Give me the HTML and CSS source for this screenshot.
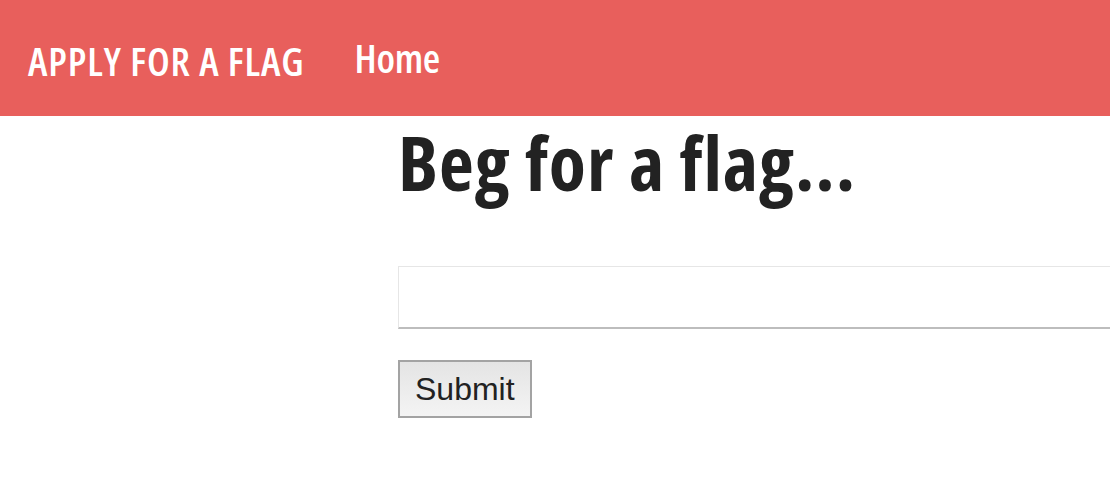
FILE: index.html
```html
<!DOCTYPE html>
<html>
<head>
<meta charset="utf-8">
<link rel="stylesheet" href="styles.css">
</head>
<body>
<nav class="navbar">
  <a class="brand" href="#">APPLY FOR A FLAG</a>
  <a class="nav-link" href="#">Home</a>
</nav>
<main class="main">
  <h1 class="title">Beg for a flag...</h1>
  <form class="form">
    <input class="field" type="text">
    <button class="submit" type="button">Submit</button>
  </form>
</main>
</body>
</html>
```

FILE: styles.css
```css
html, body {
  margin: 0;
  padding: 0;
  background: #fff;
}
body {
  font-family: "Open Sans", sans-serif;
  font-stretch: condensed;
  color: #222;
}
.navbar {
  height: 116px;
  background: #e85f5c;
  display: flex;
  align-items: center;
  padding-left: 28px;
  gap: 50px;
}
.brand, .nav-link {
  color: #fff;
  text-decoration: none;
  font-weight: 600;
  font-size: 40px;
  line-height: 1;
}
.brand {
  margin-top: 6px;
  letter-spacing: 0.95px;
}
.nav-link {
  letter-spacing: -0.3px;
}
.main {
  padding-left: 398px;
}
.title {
  margin: 0;
  font-size: 76px;
  letter-spacing: 1px;
  line-height: 1.2;
  font-weight: 700;
}
.form {
  display: flex;
  flex-direction: column;
  align-items: flex-start;
  margin-top: 59px;
  gap: 31px;
}
.field {
  box-sizing: border-box;
  width: 100%;
  height: 63px;
  border: 1px solid #e6e6e6;
  border-bottom: 2px solid #bdbdbd;
  border-right: none;
  background: #fff;
  margin: 0;
}
.submit {
  font-family: "Liberation Sans", Arial, sans-serif;
  font-stretch: normal;
  font-size: 32px;
  color: #222;
  height: 58px;
  padding: 0 15px;
  border: 2px solid #a3a3a3;
  background: linear-gradient(#e4e4e4, #f4f4f4);
  border-radius: 0;
}
```
